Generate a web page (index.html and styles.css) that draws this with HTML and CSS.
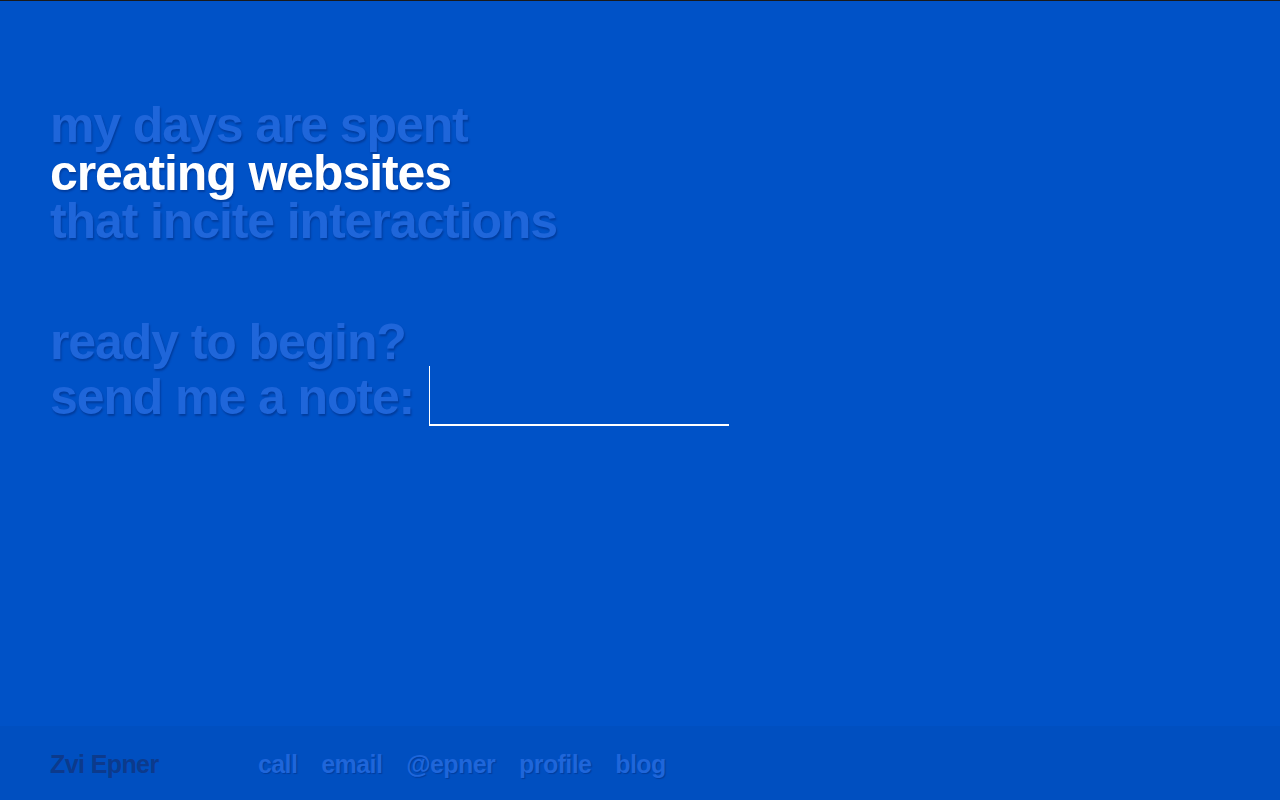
FILE: index.html
```html
<!DOCTYPE html>
<html>
<head>
<meta charset="utf-8">
<title>Zvi Epner</title>
<link rel="stylesheet" href="styles.css">
</head>
<body>
<div class="page">
  <main class="main">
    <h1 class="intro">
      <span class="line faded">my days are spent</span>
      <span class="line bright">creating websites</span>
      <span class="line faded">that incite interactions</span>
    </h1>
    <form class="contact">
      <div class="line faded">ready to begin?</div>
      <div class="note-row">
        <label class="faded" for="note">send me a note:</label>
        <input id="note" class="note-input" type="text">
      </div>
    </form>
  </main>
  <footer class="footer">
    <div class="name">Zvi Epner</div>
    <nav class="links">
      <a href="#">call</a>
      <a href="#">email</a>
      <a href="#">@epner</a>
      <a href="#">profile</a>
      <a href="#">blog</a>
    </nav>
  </footer>
</div>
</body>
</html>
```

FILE: styles.css
```css
html, body {
  margin: 0;
  padding: 0;
  height: 100%;
}
body {
  background: #0052c7;
  font-family: "Liberation Sans", Arial, Helvetica, sans-serif;
  font-weight: bold;
}
.page {
  height: 100%;
  box-sizing: border-box;
  border-top: 1px solid #1a1a1a;
  display: flex;
  flex-direction: column;
}
.main {
  flex: 1;
  padding: 100px 50px 0;
}
.intro {
  margin: 0;
  font-size: 50px;
  line-height: 48px;
  letter-spacing: -1.1px;
  font-weight: bold;
}
.line {
  display: block;
}
.faded {
  color: #1f66da;
  text-shadow: 1px 2px 2px rgba(0, 20, 80, 0.35);
}
.bright {
  color: #ffffff;
  text-shadow: 1px 2px 2px rgba(0, 20, 80, 0.35);
}
.contact {
  margin-top: 70px;
  font-size: 50px;
  line-height: 55px;
  letter-spacing: -1.1px;
}
.note-row {
  display: flex;
  align-items: flex-start;
  gap: 15px;
}
.note-row label {
  line-height: 55px;
}
.note-input {
  width: 300px;
  height: 60px;
  box-sizing: border-box;
  margin: -4px 0 0 0;
  border: none;
  border-left: 1px solid #ffffff;
  border-bottom: 2px solid #ffffff;
  background: transparent;
  color: #ffffff;
  font: inherit;
  padding: 0 6px;
  outline: none;
}
.footer {
  height: 74px;
  background: #004fc0;
  display: flex;
  align-items: center;
  padding: 2px 50px 0;
  box-sizing: border-box;
  font-size: 25px;
  letter-spacing: -0.6px;
}
.name {
  color: #0c3a8c;
  width: 208px;
}
.links {
  display: flex;
  gap: 24px;
}
.links a {
  color: #1f66da;
  text-decoration: none;
  text-shadow: 1px 1px 1px rgba(0, 20, 80, 0.3);
}
```
